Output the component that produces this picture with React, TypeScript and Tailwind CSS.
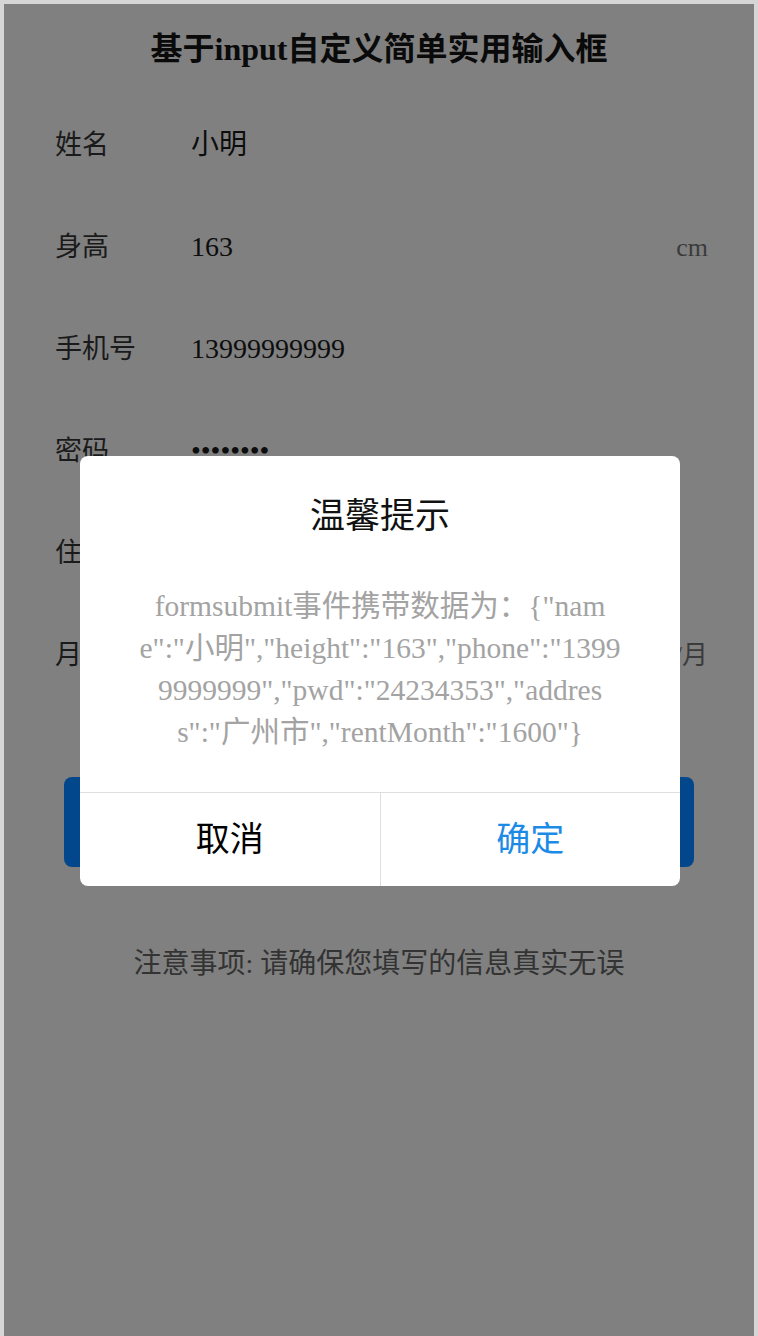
const serif = "font-['Liberation_Serif','Noto_Sans_CJK_SC',serif]";

type Row = { label: string; value: string; suffix?: string };

// 住址 / 月租 values sit under the dialog and are not visible
const rows: Row[] = [
  { label: "姓名", value: "小明" },
  { label: "身高", value: "163", suffix: "cm" },
  { label: "手机号", value: "13999999999" },
  { label: "密码", value: "••••••••" },
  { label: "住址", value: "" },
  { label: "月租", value: "", suffix: "元/月" },
];

const bodyLines = [
  'formsubmit事件携带数据为：{"nam',
  'e":"小明","height":"163","phone":"1399',
  '9999999","pwd":"24234353","addres',
  's":"广州市","rentMonth":"1600"}',
];

function Dialog() {
  return (
    <div className="absolute left-[76px] top-[452px] w-[600px] rounded-[8px] bg-white overflow-hidden">
      <div className="pt-[41px] h-[81px] text-center text-[35px] leading-[40px] text-[#111]">
        温馨提示
      </div>
      <div className="pt-[48px] pb-[39px] text-center text-[29.5px] leading-[42px] text-[#a3a3a3] whitespace-nowrap">
        {bodyLines.map((l) => (
          <div key={l}>{l}</div>
        ))}
      </div>
      <div className="flex h-[94px] border-t border-[#dedede]">
        <div className="flex-1 flex items-center justify-center text-[34px] text-black border-r border-[#dedede]">
          取消
        </div>
        <div className="flex-1 flex items-center justify-center text-[34px] text-[#1b8be6]">
          确定
        </div>
      </div>
    </div>
  );
}

export default function App() {
  return (
    <div className={`w-[758px] h-[1336px] bg-[#d6d6d6] pt-[4px] px-[4px] ${serif}`}>
      <div className="relative h-full bg-[#808080]">
        <div className="h-[90px] flex items-center justify-center text-[32px] font-bold text-[#0a0a0a]">
          基于input自定义简单实用输入框
        </div>
        <div className="flex flex-col">
          {rows.map((r) => (
            <div key={r.label} className="h-[102px] flex items-center pl-[51px] pr-[46px]">
              <div className="w-[136px] text-[27px] text-[#1a1a1a]">{r.label}</div>
              <div className="flex-1 text-[28px] text-[#0d0d0d]">{r.value}</div>
              {r.suffix && <div className="text-[26px] text-[#3b3b3b]">{r.suffix}</div>}
            </div>
          ))}
        </div>
        <div className="mt-[71px] mx-[60px] h-[90px] rounded-[8px] bg-[#02478c] flex items-center justify-center text-[30px] text-[#808080]">
          提交
        </div>
        <div className="mt-[79px] text-center text-[28px] leading-[36px] text-[#333]">
          注意事项: 请确保您填写的信息真实无误
        </div>
        <Dialog />
      </div>
    </div>
  );
}
